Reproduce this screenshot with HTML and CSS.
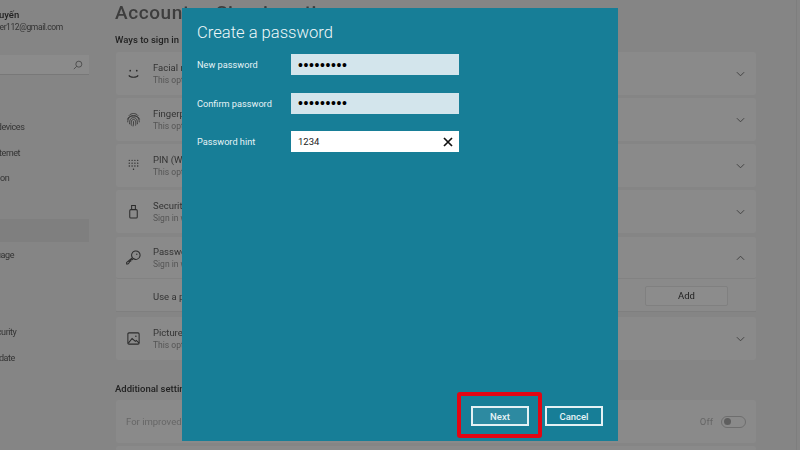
FILE: index.html
```html
<!DOCTYPE html>
<html lang="en">
<head>
  <meta charset="UTF-8">
  <title>Sign-in options</title>
  <link rel="stylesheet" href="styles.css">
</head>
<body>

  <div class="app">
    <aside class="sidebar">
      <div class="user">
        <div class="user-name">Nguyễn Tuyến</div>
        <div class="user-mail">tuyenfinger112@gmail.com</div>
      </div>
      <div class="search">
        <svg class="search-icon" viewBox="0 0 12 12" width="10" height="10"><circle cx="7" cy="5" r="3.6"/><path d="M4.4 7.6 1 11"/></svg>
      </div>
      <nav class="nav">
        <div class="nav-item">System</div>
        <div class="nav-item">Bluetooth &amp; devices</div>
        <div class="nav-item">Network &amp; internet</div>
        <div class="nav-item">Personalisation</div>
        <div class="nav-item">Apps</div>
        <div class="nav-item active">Accounts</div>
        <div class="nav-item">Time &amp; language</div>
        <div class="nav-item">Gaming</div>
        <div class="nav-item">Accessibility</div>
        <div class="nav-item">Privacy &amp; security</div>
        <div class="nav-item">Windows Update</div>
      </nav>
    </aside>

    <main class="content">
      <h1 class="page-title">Accounts &nbsp;› &nbsp;Sign-in options</h1>
      <h2 class="section-title">Ways to sign in</h2>

      <div class="card">
        <svg class="card-icon" viewBox="0 0 16 16"><circle cx="4.5" cy="5" r=".9" class="fill"/><circle cx="11.5" cy="5" r=".9" class="fill"/><path d="M3 10c1.5 2.6 8.500 2.600 10 0"/></svg>
        <div class="card-text">
          <div class="card-name">Facial recognition (Windows Hello)</div>
          <div class="card-sub">This option is currently unavailable</div>
        </div>
        <svg class="chevron" viewBox="0 0 10 6"><path d="M1 1l4 4 4-4"/></svg>
      </div>

      <div class="card">
        <svg class="card-icon thin" viewBox="0 0 16 16"><path d="M3 4C5.500 .800 10.500 .800 13 4M1.500 8C2.500 2.500 13.500 2.500 14.500 8M1.800 11C2 5.500 5 4.200 8 4.200S14 5.500 14.200 11M3.800 13C3.500 8 5.500 6 8 6s4.500 2 4.200 7M5.800 14.500C5 10.500 6 7.900 8 7.900s3 2.600 2.200 6.600M8 9.800c.2 2 0 4-.5 5.500"/></svg>
        <div class="card-text">
          <div class="card-name">Fingerprint recognition (Windows Hello)</div>
          <div class="card-sub">This option is currently unavailable</div>
        </div>
        <svg class="chevron" viewBox="0 0 10 6"><path d="M1 1l4 4 4-4"/></svg>
      </div>

      <div class="card">
        <svg class="card-icon" viewBox="0 0 16 16"><path class="dots" d="M3.500 2.500h.01M6.500 2.500h.01M9.500 2.500h.01M12.500 2.500h.01M3.500 5.500h.01M6.500 5.500h.01M9.500 5.500h.01M12.500 5.500h.01M3.500 8.500h.01M6.500 8.500h.01M9.500 8.500h.01M12.500 8.500h.01M8 12h.01"/></svg>
        <div class="card-text">
          <div class="card-name">PIN (Windows Hello)</div>
          <div class="card-sub">This option is currently unavailable</div>
        </div>
        <svg class="chevron" viewBox="0 0 10 6"><path d="M1 1l4 4 4-4"/></svg>
      </div>

      <div class="card">
        <svg class="card-icon" viewBox="0 0 16 16"><rect x="4" y="6" width="8" height="9" rx="1.200"/><path d="M6 6V1.500h4V6"/></svg>
        <div class="card-text">
          <div class="card-name">Security key</div>
          <div class="card-sub">Sign in with a physical security key</div>
        </div>
        <svg class="chevron" viewBox="0 0 10 6"><path d="M1 1l4 4 4-4"/></svg>
      </div>

      <div class="card-group">
        <div class="card card-head">
          <svg class="card-icon" viewBox="0 0 16 16"><path d="M6.900 8.200A4.500 4.500 0 1 1 7.800 9.100L6.500 10.500H5V12H3.500V13.500L2 15H.7V13.300Z"/><circle cx="11.500" cy="4.500" r=".7" class="fill"/></svg>
          <div class="card-text">
            <div class="card-name">Password</div>
            <div class="card-sub">Sign in with your account's password</div>
          </div>
          <svg class="chevron" viewBox="0 0 10 6"><path d="M1 5l4-4 4 4"/></svg>
        </div>
        <div class="card-row">
          <div class="row-text">Use a password to sign in to apps and services</div>
          <div class="add-btn">Add</div>
        </div>
      </div>

      <div class="card">
        <svg class="card-icon" viewBox="0 0 16 16"><rect x="2" y="2" width="12" height="12" rx="1.200"/><path d="M2.500 13 6.500 8l3.500 3 1-1 3 3"/><circle cx="10.500" cy="5.500" r=".8" class="fill"/></svg>
        <div class="card-text">
          <div class="card-name">Picture password</div>
          <div class="card-sub">This option is currently unavailable</div>
        </div>
        <svg class="chevron" viewBox="0 0 10 6"><path d="M1 1l4 4 4-4"/></svg>
      </div>

      <h2 class="section-title extra">Additional settings</h2>

      <div class="card">
        <div class="muted">For improved security, only allow Windows Hello sign-in</div>
        <div class="muted off">Off</div>
        <div class="toggle"><span class="knob"></span></div>
      </div>
      <div class="card card-peek"></div>
    </main>
  </div>

  <div class="dialog">
    <div class="dialog-title">Create a password</div>

    <div class="form">
      <label class="form-row">
        <span class="form-label">New password</span>
        <input class="form-input" type="password" value="123456789">
      </label>
      <label class="form-row">
        <span class="form-label">Confirm password</span>
        <input class="form-input" type="password" value="123456789">
      </label>
      <label class="form-row">
        <span class="form-label">Password hint</span>
        <span class="hint-box">
          <input class="hint-input" type="text" value="1234">
          <svg class="clear" viewBox="0 0 10 10" width="10" height="10"><path d="M1 1l8 8M9 1 1 9"/></svg>
        </span>
      </label>
    </div>

    <div class="dialog-foot">
      <button class="btn btn-next">Next</button>
      <button class="btn">Cancel</button>
      <div class="highlight"></div>
    </div>
  </div>

</body>
</html>
```

FILE: styles.css
```css
html, body {
  margin: 0;
  height: 100%;
  overflow: hidden;
}

body {
  position: relative;
  background: #858585;
  font-family: Roboto, "Open Sans", sans-serif;
  color: #2e2e2e;
}

.app {
  display: flex;
  height: 450px;
  margin-left: -50px;
  overflow: hidden;
  filter: blur(0.35px);
}

/* the sidebar runs off the left edge of the shot */
.sidebar {
  width: 139px;
  flex-shrink: 0;
  padding-top: 8px;
}

.user {
  height: 47px;
}

.user-name {
  font-size: 9.500px;
  font-weight: 500;
  line-height: 13px;
  margin-left: 9px;
  color: #222;
}

.user-mail {
  font-size: 8.500px;
  letter-spacing: -.4px;
  line-height: 12px;
  color: #333;
  margin-left: 18px;
}

.search {
  height: 19px;
  background: #8b8b8b;
  border-bottom: 1px solid #787878;
  display: flex;
  align-items: center;
  justify-content: flex-end;
  padding-right: 6px;
}

.search-icon {
  fill: none;
  stroke: #444;
  stroke-width: 1;
}

.nav {
  margin-top: 15.500px;
}

.nav-item {
  height: 23px;
  line-height: 23px;
  margin-bottom: 2.670px;
  font-size: 9px;
  letter-spacing: -.4px;
  text-indent: 3px;
  white-space: nowrap;
  color: #333;
}

.nav-item.active {
  background: #7f7f7f;
}

.content {
  flex: 1;
  padding: 0 40px 0 27px;
  border-right: 1px solid #7e7e7e;
  margin-right: 3px;
}

.page-title {
  margin: 1px 0 0 -1px;
  font-size: 19px;
  font-weight: 500;
  letter-spacing: .6px;
  word-spacing: -3px;
  line-height: 24px;
  color: #3d3d3d;
  white-space: nowrap;
}

.section-title {
  margin: 9px 0 6px -1px;
  font-size: 9.500px;
  font-weight: 500;
  line-height: 12px;
  color: #222;
}

.section-title.extra {
  margin: 23px 0 5px -1px;
}

.card {
  display: flex;
  align-items: center;
  height: 43px;
  margin-bottom: 3px;
  background: #8a8a8a;
  border-radius: 2px;
}

.card-peek {
  height: 5px;
  margin: 0;
}

.card-icon {
  width: 15px;
  height: 15px;
  margin: 0 12px 0 10px;
  flex-shrink: 0;
  fill: none;
  stroke: #2b2b2b;
  stroke-width: 1.100;
}

.card-icon.thin {
  stroke-width: .8;
}

.card-icon .fill {
  fill: #2b2b2b;
  stroke: none;
}

.card-icon .dots {
  stroke-width: 1.500;
  stroke-linecap: round;
}

.card-text {
  flex: 1;
}

.card-name {
  font-size: 9.500px;
  line-height: 12px;
  color: #333;
}

.card-sub {
  margin-top: 1px;
  font-size: 8.500px;
  line-height: 11px;
  color: #555;
}

.chevron {
  width: 9px;
  height: 6px;
  margin-right: 11px;
  fill: none;
  stroke: #3c3c3c;
  stroke-width: 1;
}

.card-group {
  margin: 4px 0 5px;
  background: #8a8a8a;
  border-radius: 2px;
}

.card-head {
  height: 41px;
  margin: 0;
  border-bottom: 1px solid #828282;
}

.card-row {
  display: flex;
  align-items: center;
  height: 33px;
  padding: 2px 0 0 37px;
  border-bottom: 1px solid #7f7f7f;
  box-sizing: border-box;
}

.row-text {
  flex: 1;
  font-size: 9.500px;
  color: #333;
}

.add-btn {
  width: 83px;
  height: 20px;
  margin-right: 28px;
  background: #8c8c8c;
  border: 1px solid #808080;
  border-radius: 2px;
  box-sizing: border-box;
  text-align: center;
  font-size: 9.500px;
  line-height: 18px;
  color: #222;
}

.muted {
  font-size: 9.500px;
  color: #666;
}

.card > .muted:first-child {
  flex: 1;
  padding-left: 10px;
}

.off {
  margin-right: 8px;
}

.toggle {
  width: 25px;
  height: 12px;
  margin-right: 10px;
  border: 1px solid #6e6e6e;
  border-radius: 7px;
  box-sizing: border-box;
  display: flex;
  align-items: center;
  padding-left: 2px;
}

.knob {
  width: 7px;
  height: 7px;
  border-radius: 50%;
  background: #5e5e5e;
}

.dialog {
  position: absolute;
  left: 182px;
  top: 8px;
  width: 436px;
  height: 433px;
  background: #177e97;
  color: #e6f3f6;
  display: flex;
  flex-direction: column;
}

.dialog-title {
  margin: 13px 0 0 15px;
  font-size: 16.600px;
  font-weight: 300;
  line-height: 23px;
  color: #eef7f9;
}

.form {
  flex: 1;
  margin-top: 10px;
}

.form-row {
  display: flex;
  align-items: center;
  height: 21px;
  margin-bottom: 17.500px;
  padding-left: 15px;
}

.form-label {
  width: 94px;
  font-size: 9.200px;
}

.form-input {
  width: 168px;
  height: 21px;
  padding: 0 7px;
  border: 0;
  box-sizing: border-box;
  background: #d3e5ec;
  font-size: 14px;
  letter-spacing: .6px;
  color: #000;
}

.hint-box {
  display: flex;
  align-items: center;
  width: 168px;
  height: 21px;
  background: #fff;
}

.hint-input {
  flex: 1;
  min-width: 0;
  padding: 0 7px;
  border: 0;
  background: transparent;
  font-family: Roboto, sans-serif;
  font-size: 9.500px;
  color: #222;
}

.clear {
  margin-right: 6px;
  fill: none;
  stroke: #111;
  stroke-width: 1.700;
}

.dialog-foot {
  position: relative;
  display: flex;
  justify-content: flex-end;
  gap: 16px;
  padding: 0 15px 15px 0;
}

.btn {
  width: 58px;
  height: 20px;
  padding: 0;
  background: transparent;
  border: 2px solid #e4f1f4;
  box-sizing: border-box;
  font-family: Roboto, sans-serif;
  font-size: 9.500px;
  font-weight: 500;
  color: #e6f3f6;
}

.btn-next {
  background: #2d8aa1;
}

.highlight {
  position: absolute;
  left: 275px;
  top: -14px;
  box-sizing: border-box;
  width: 85px;
  height: 46px;
  border: 4px solid #e30613;
  border-radius: 3px;
}
```
